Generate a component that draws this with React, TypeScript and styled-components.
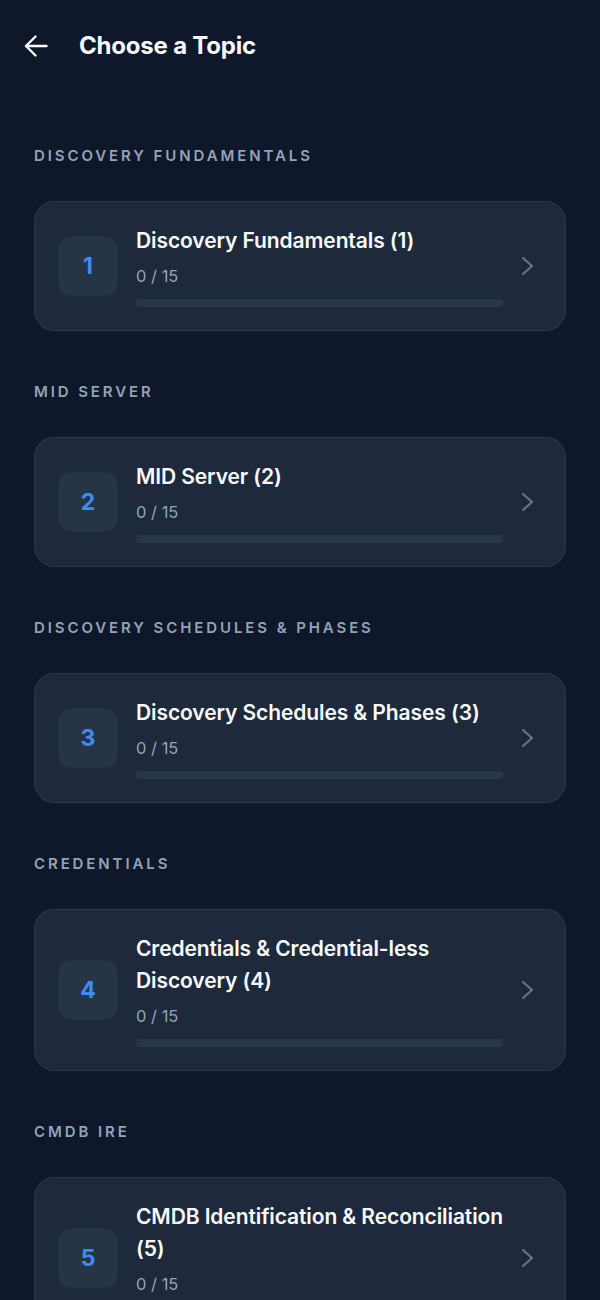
import React, { FC } from "react";
import styled, { createGlobalStyle } from "styled-components";

type Topic = {
  section: string;
  title: string;
  done: number;
  total: number;
};

const topics: Topic[] = [
  { section: "Discovery Fundamentals", title: "Discovery Fundamentals (1)", done: 0, total: 15 },
  { section: "MID Server", title: "MID Server (2)", done: 0, total: 15 },
  { section: "Discovery Schedules & Phases", title: "Discovery Schedules & Phases (3)", done: 0, total: 15 },
  { section: "Credentials", title: "Credentials & Credential-less Discovery (4)", done: 0, total: 15 },
  { section: "CMDB IRE", title: "CMDB Identification & Reconciliation (5)", done: 0, total: 15 },
];

const App: FC = (): JSX.Element => {
  return (
    <Wrapper>
      <GlobalStyle />
      <Header>
        <BackButton type="button" aria-label="Back">
          <svg width="24" height="24" viewBox="0 0 24 24" fill="none" stroke="currentColor" strokeWidth="2.4" strokeLinecap="round" strokeLinejoin="round">
            <path d="M22.5 12H2" />
            <path d="M11.5 2.5 2 12l9.5 9.5" />
          </svg>
        </BackButton>
        <Title>Choose a Topic</Title>
      </Header>

      <List>
        {topics.map((t, i) => (
          <Section key={t.title}>
            <SectionLabel>{t.section}</SectionLabel>
            <Card type="button">
              <NumberBox>{i + 1}</NumberBox>
              <Content>
                <CardTitle>{t.title}</CardTitle>
                <Count>
                  {t.done} / {t.total}
                </Count>
                <Track>
                  <Fill style={{ width: `${(t.done / t.total) * 100}%` }} />
                </Track>
              </Content>
              <Chevron width="24" height="24" viewBox="0 0 24 24" fill="none" stroke="currentColor" strokeWidth="2.2" strokeLinecap="round" strokeLinejoin="round">
                <path d="M7 4l9 8-9 8" />
              </Chevron>
            </Card>
          </Section>
        ))}
      </List>
    </Wrapper>
  );
};

export default App;

const GlobalStyle = createGlobalStyle`
  html, body {
    margin: 0;
    padding: 0;
    background: #0f172a;
  }
  body {
    font-family: Inter, "Noto Sans", "Liberation Sans", sans-serif;
    -webkit-font-smoothing: antialiased;
  }
`;

const Wrapper = styled.div`
  min-height: 1300px;
  background: #0f172a;
  color: #f8fafc;
  overflow: hidden;
`;

const Header = styled.header`
  display: flex;
  align-items: center;
  gap: 31px;
  height: 92px;
  padding: 0 24px;
  box-sizing: border-box;
`;

const BackButton = styled.button`
  display: flex;
  align-items: center;
  justify-content: center;
  width: 24px;
  height: 24px;
  padding: 0;
  border: none;
  background: none;
  color: #f8fafc;
  cursor: pointer;
`;

const Title = styled.h1`
  margin: 0;
  font-size: 24px;
  line-height: 32px;
  font-weight: 700;
  letter-spacing: -0.2px;
  color: #f8fafc;
`;

const List = styled.main`
  display: flex;
  flex-direction: column;
  gap: 51px;
  padding: 54px 34px 0;
`;

const Section = styled.section`
  display: flex;
  flex-direction: column;
  gap: 35px;
`;

const SectionLabel = styled.h2`
  margin: 0;
  font-size: 15px;
  line-height: 20px;
  font-weight: 600;
  letter-spacing: 2.9px;
  text-transform: uppercase;
  color: #94a3b8;
`;

const Card = styled.button`
  display: flex;
  align-items: center;
  width: 100%;
  padding: 23px 25px 23px 23px;
  box-sizing: border-box;
  background: #1e293b;
  border: 1px solid #2c3a4f;
  border-radius: 20px;
  font: inherit;
  color: inherit;
  text-align: left;
  cursor: pointer;
`;

const NumberBox = styled.div`
  flex: 0 0 60px;
  height: 60px;
  display: flex;
  align-items: center;
  justify-content: center;
  margin-right: 18px;
  border-radius: 14px;
  background: #273446;
  color: #3b8ef5;
  font-size: 23px;
  font-weight: 700;
`;

const Content = styled.div`
  flex: 1;
  min-width: 0;
  display: flex;
  flex-direction: column;
  margin-right: 6px;
`;

const CardTitle = styled.div`
  font-size: 21px;
  line-height: 32px;
  font-weight: 600;
  letter-spacing: -0.1px;
  color: #f8fafc;
`;

const Count = styled.div`
  margin-top: 7px;
  font-size: 16.5px;
  line-height: 24px;
  color: #94a3b8;
`;

const Track = styled.div`
  margin: 11px 7px 0 0;
  height: 8px;
  border-radius: 4px;
  background: #2a3649;
  overflow: hidden;
`;

const Fill = styled.div`
  height: 100%;
  background: #3b8ef5;
`;

const Chevron = styled.svg`
  flex: 0 0 24px;
  color: #64748b;
`;
